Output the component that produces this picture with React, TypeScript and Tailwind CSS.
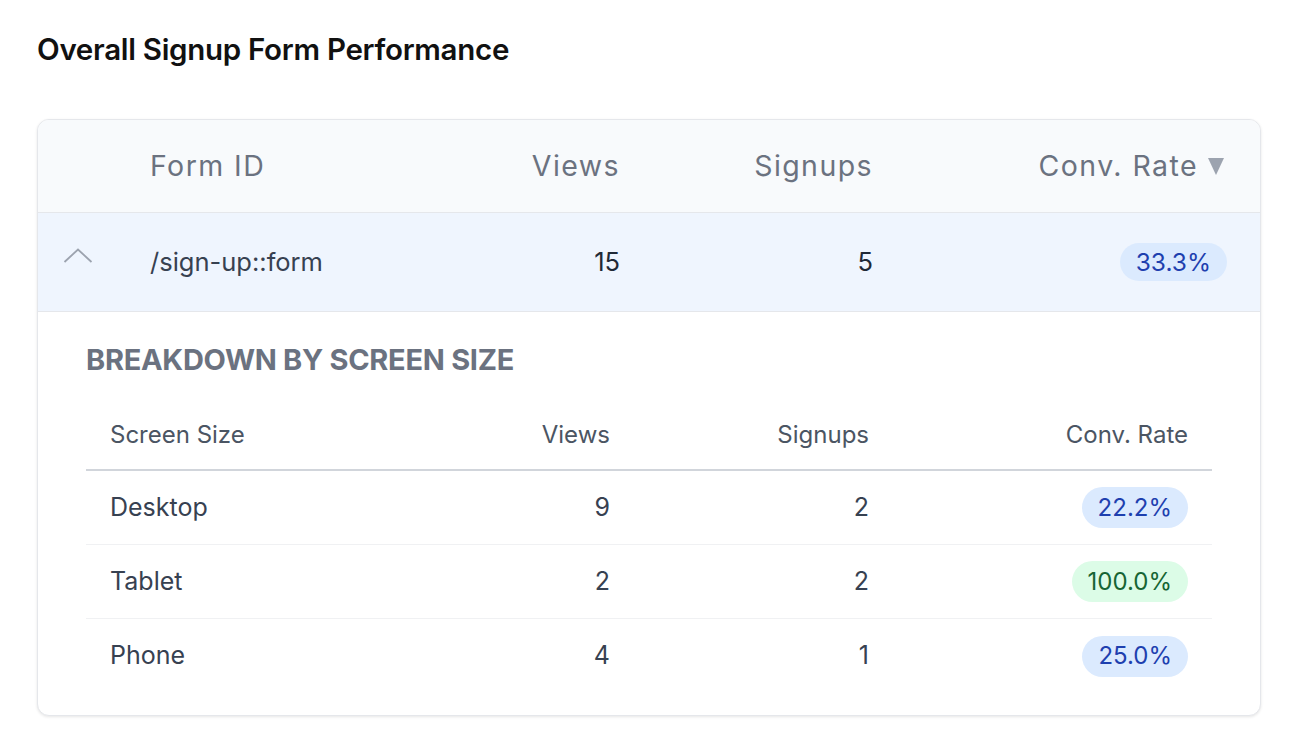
import React from "react";

const font = { fontFamily: "Inter, 'Noto Sans', sans-serif" };

function Badge({ value, tone }: { value: string; tone: "blue" | "green" }) {
  const cls =
    tone === "green"
      ? "bg-[#dcfce7] text-[#166534]"
      : "bg-[#dbeafe] text-[#1e40af]";
  return (
    <span className={`inline-flex items-center rounded-full px-4 h-[41px] text-[24px] ${cls}`}>
      {value}
    </span>
  );
}

const rows = [
  { size: "Desktop", views: 9, signups: 2, rate: "22.2%", tone: "blue" as const },
  { size: "Tablet", views: 2, signups: 2, rate: "100.0%", tone: "green" as const },
  { size: "Phone", views: 4, signups: 1, rate: "25.0%", tone: "blue" as const },
];

export default function App() {
  return (
    <div className="min-h-[756px] bg-white pl-[37px] pr-[43px] pt-[29px]" style={font}>
      <h2 className="text-[29.5px] font-semibold text-[#111111] leading-[40px] tracking-[-0.01em]">
        Overall Signup Form Performance
      </h2>

      <div className="mt-[50px] rounded-[12px] border border-[#e5e7eb] bg-white shadow-[0_1px_3px_rgba(0,0,0,0.1)] overflow-hidden">
        {/* Header */}
        <div className="grid grid-cols-[112px_300px_170px_253px_1fr] pr-[36px] h-[93px] items-center bg-[#f8fafc] border-b border-[#e5e7eb] text-[28.5px] tracking-[0.05em] text-[#6b7280]">
          <div />
          <div>Form ID</div>
          <div className="text-right">Views</div>
          <div className="text-right">Signups</div>
          <div className="flex items-center justify-end gap-[10px]">
            <span>Conv. Rate</span>
            <svg width="16" height="17" viewBox="0 0 16 17">
              <path d="M0 0 H16 L8 17 Z" fill="#9ca3af" />
            </svg>
          </div>
        </div>

        {/* Main row */}
        <div className="grid grid-cols-[112px_300px_170px_253px_1fr] pr-[33px] h-[99px] items-center bg-[#eff5fe] border-b border-[#e5e7eb] text-[25.5px] text-[#1f2937]">
          <div className="flex justify-start pl-[25px] pb-[14px]">
            <svg width="30" height="15" viewBox="0 0 30 15" fill="none">
              <path d="M1.5 14 L15 1.5 L28.5 14" stroke="#9ca3af" strokeWidth="1.8" />
            </svg>
          </div>
          <div className="text-[#374151]">/sign-up::form</div>
          <div className="text-right">15</div>
          <div className="text-right">5</div>
          <div className="flex justify-end">
            <span className="inline-flex items-center rounded-full px-4 h-[38px] text-[24.5px] bg-[#dbeafe] text-[#1e40af]">
              33.3%
            </span>
          </div>
        </div>

        {/* Breakdown */}
        <div className="px-[48px] pt-[28px] pb-[22px]">
          <div className="text-[29px] font-bold uppercase text-[#6b7280] leading-[40px] tracking-[-0.01em]">
            Breakdown by Screen Size
          </div>
          <div className="mt-[21px]">
            <div className="grid grid-cols-[1fr_264px_259px_319px] h-[70px] items-center border-b-2 border-[#d1d5db] text-[24px] text-[#4b5563]">
              <div className="pl-6">Screen Size</div>
              <div className="text-right pr-6">Views</div>
              <div className="text-right pr-6">Signups</div>
              <div className="text-right pr-6">Conv. Rate</div>
            </div>
            {rows.map((r, i) => (
              <div
                key={r.size}
                className={`grid grid-cols-[1fr_264px_259px_319px] h-[74px] items-center text-[25px] text-[#374151] ${
                  i < rows.length - 1 ? "border-b border-[#f0f1f3]" : ""
                }`}
              >
                <div className="pl-6">{r.size}</div>
                <div className="text-right pr-6">{r.views}</div>
                <div className="text-right pr-6">{r.signups}</div>
                <div className="flex justify-end pr-6">
                  <Badge value={r.rate} tone={r.tone} />
                </div>
              </div>
            ))}
          </div>
        </div>
      </div>
    </div>
  );
}
